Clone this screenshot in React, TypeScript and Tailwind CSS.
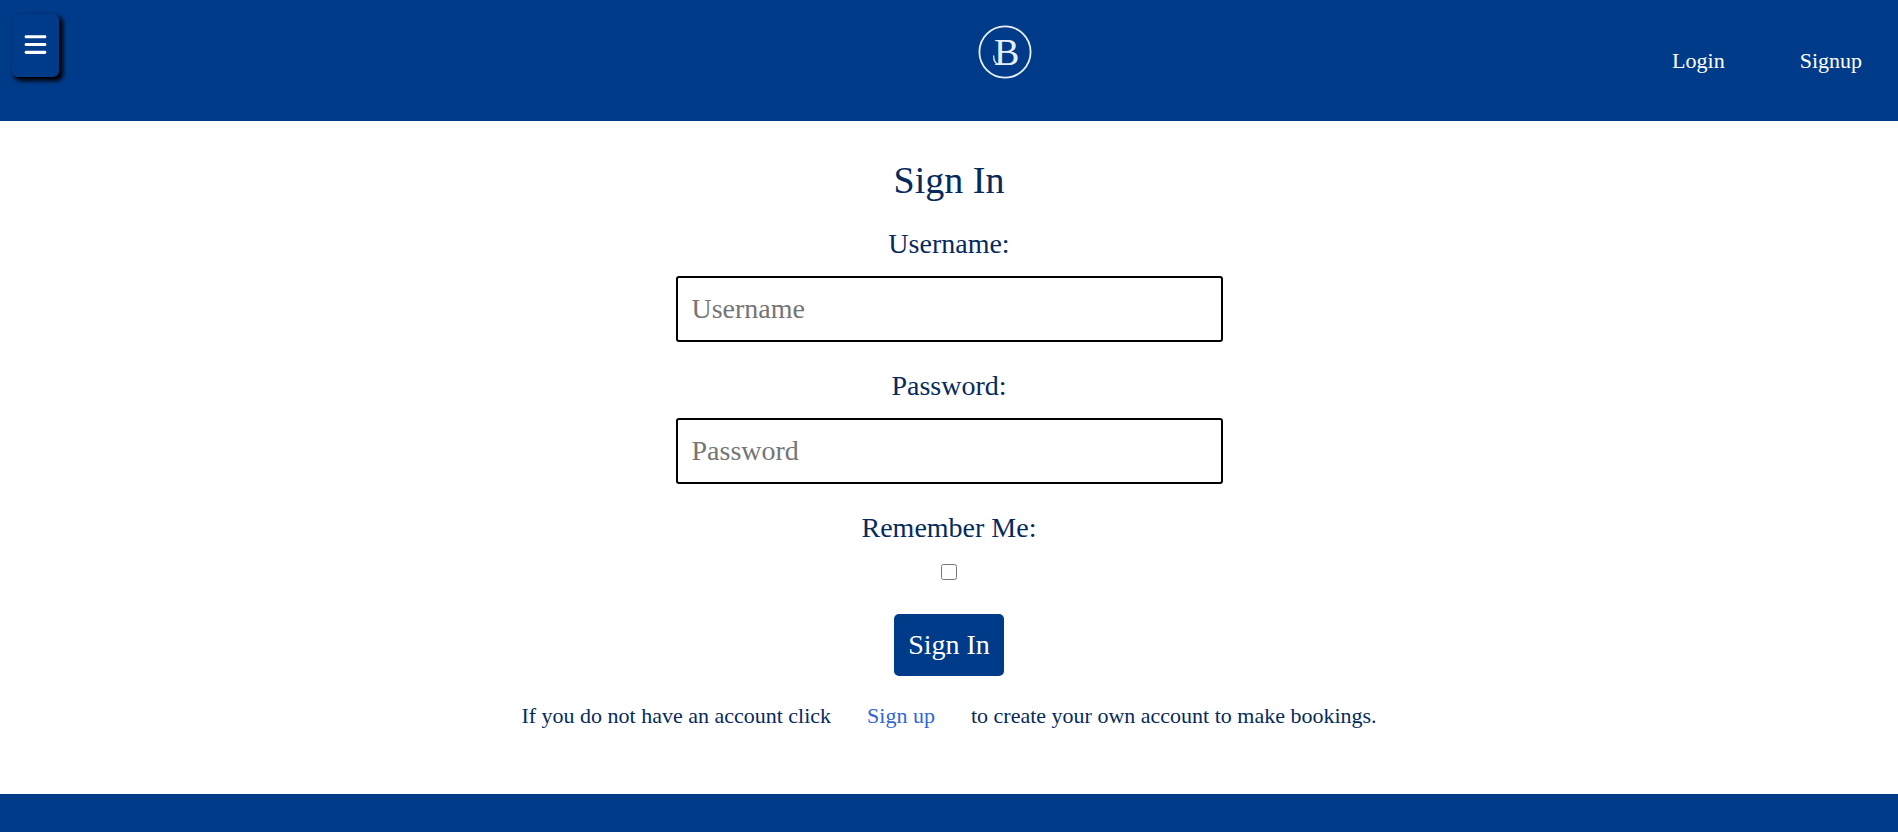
import { FaBars } from "react-icons/fa6";

function Logo() {
  return (
    <svg width="54" height="54" viewBox="0 0 54 54" role="img" aria-label="B" className="block">
      <circle cx="27" cy="27" r="25.6" fill="none" stroke="#e6effa" strokeWidth="1.8" />
      <text x="16" y="40" fontSize="38" fill="#e6effa" fontFamily="'Liberation Serif', serif">
        B
      </text>
      <path d="M15.600 30.500c0 5.400 2.400 9 6.600 9" fill="none" stroke="#e6effa" strokeWidth="1.300" />
    </svg>
  );
}

function Header() {
  return (
    <header className="flex h-[121px] bg-[#003b8a] text-white">
      <div className="w-28 shrink-0 pt-3.5 pl-3">
        <button
          type="button"
          aria-label="Open menu"
          className="flex h-[63px] w-[47px] justify-center rounded-md pt-[18px] shadow-[3px_3px_4px_1px_#000000]"
        >
          <FaBars size={25} />
        </button>
      </div>
      <div className="flex-1" />
      <a href="#home" className="self-start pt-[25px]">
        <Logo />
      </a>
      <div className="flex flex-1 items-center justify-end">
        <nav className="flex gap-[75px] pr-9 text-[22px] leading-7">
          <a href="#login">Login</a>
          <a href="#signup">Signup</a>
        </nav>
      </div>
    </header>
  );
}

function Field({ id, label, type }: { id: string; label: string; type: string }) {
  return (
    <div className="mb-7 flex w-full flex-col items-center">
      <label htmlFor={id} className="mb-4 text-[28px] leading-8">
        {label}:
      </label>
      <input
        id={id}
        type={type}
        placeholder={label}
        className="h-[66px] w-full rounded-[3px] border-2 border-black bg-white px-3.5 text-[28px] placeholder:text-[#757575]"
      />
    </div>
  );
}

export default function App() {
  return (
    <div className="flex min-h-screen flex-col bg-white font-['Liberation_Serif',serif] text-[#062a5c]">
      <Header />
      <main className="flex flex-col items-center pb-[62px]">
        <h1 className="mt-9 text-[38px] leading-[47px]">Sign In</h1>
        <form className="mt-6 flex w-full max-w-[547px] flex-col items-center">
          <Field id="username" label="Username" type="text" />
          <Field id="password" label="Password" type="password" />
          <label htmlFor="remember" className="text-[28px] leading-8">
            Remember Me:
          </label>
          <input id="remember" type="checkbox" className="mt-5 size-4" />
          <button
            type="submit"
            className="mt-[34px] h-[62px] rounded-[5px] bg-[#003b8a] px-3.5 text-[28px] text-white"
          >
            Sign In
          </button>
        </form>
        <p className="mt-6 text-[22px] leading-8">
          If you do not have an account click
          <a href="#signup" className="px-9 text-[#2f66d8]">
            Sign up
          </a>
          to create your own account to make bookings.
        </p>
      </main>
      <footer className="flex-1 bg-[#003b8a]" />
    </div>
  );
}
